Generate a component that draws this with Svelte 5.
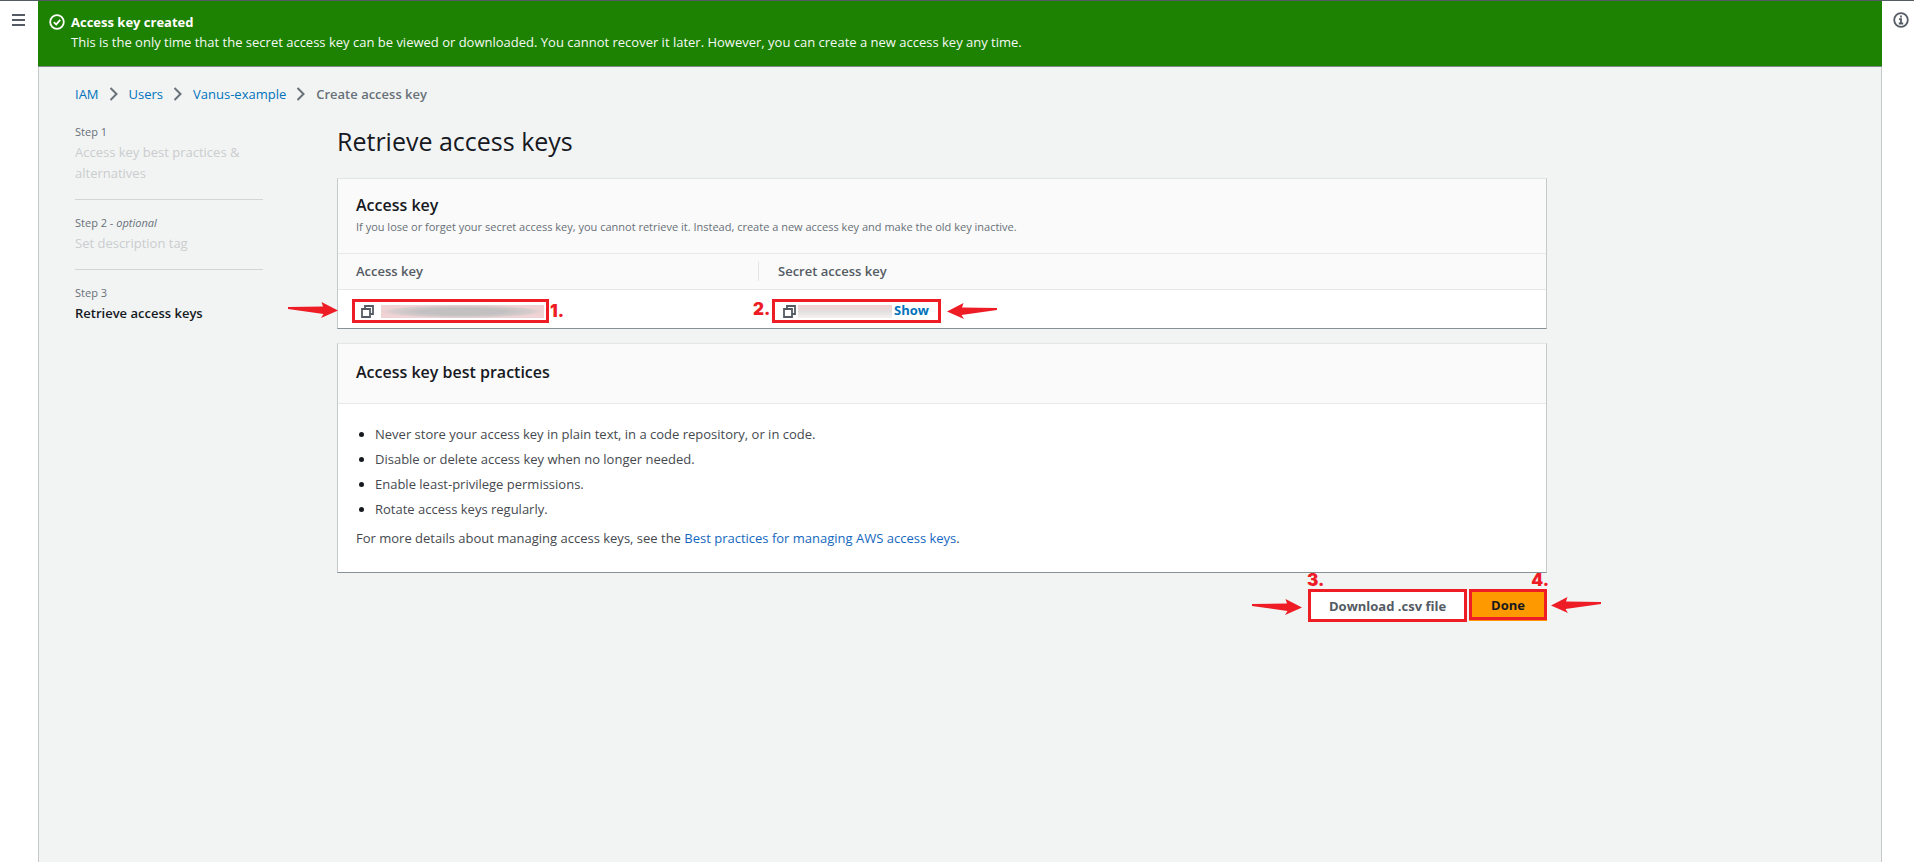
<script>
  const crumbs = ['IAM', 'Users', 'Vanus-example'];
  const steps = [
    { label: 'Step 1', title: 'Access key best practices & alternatives' },
    { label: 'Step 2', optional: true, title: 'Set description tag' },
    { label: 'Step 3', title: 'Retrieve access keys', current: true }
  ];
  const practices = [
    'Never store your access key in plain text, in a code repository, or in code.',
    'Disable or delete access key when no longer needed.',
    'Enable least-privilege permissions.',
    'Rotate access keys regularly.'
  ];
</script>

{#snippet arrow(name)}
  <svg class="arrow {name}" viewBox="0 0 50 16" width="50" height="16" aria-hidden="true">
    <path d="M0 5 L35 4.500 L33.500 0 L50 8.500 L33 16 L35.500 12 L0 7 Z" fill="#ee1c25" />
  </svg>
{/snippet}

{#snippet copyIcon()}
  <svg viewBox="0 0 13 13" width="13" height="13" fill="none" stroke="#545b64" stroke-width="1.800" aria-hidden="true">
    <path d="M1 4h8v8H1zM4 4V1h8v8H9" />
  </svg>
{/snippet}

<div class="shell">
  <div class="rail left">
    <button class="icon" aria-label="Open navigation">
      <svg viewBox="0 0 13 12" width="13" height="12" stroke="#545b64" stroke-width="2" aria-hidden="true">
        <path d="M0 1h13M0 6h13M0 11h13" />
      </svg>
    </button>
  </div>

  <div class="main">
    <div class="flash" role="status">
      <svg viewBox="0 0 16 16" width="16" height="16" fill="none" stroke="#fff" stroke-width="1.800" aria-hidden="true">
        <circle cx="8" cy="8" r="6.800" />
        <path d="M4.800 8.200 7.200 10.400 11.200 5.800" />
      </svg>
      <div>
        <strong>Access key created</strong>
        <p>This is the only time that the secret access key can be viewed or downloaded. You cannot recover it later. However, you can create a new access key any time.</p>
      </div>
    </div>

    <div class="page">
      <nav class="crumbs" aria-label="Breadcrumbs">
        {#each crumbs as crumb}
          <a href="#top">{crumb}</a>
          <svg viewBox="0 0 10 14" width="10" height="14" fill="none" stroke="#687078" stroke-width="2" aria-hidden="true">
            <path d="M1.500 1 7.500 7 1.500 13" />
          </svg>
        {/each}
        <span>Create access key</span>
      </nav>

      <div class="wizard">
        <ol class="steps">
          {#each steps as step}
            <li class:current={step.current}>
              <small>{step.label}{#if step.optional}{' '}- <em>optional</em>{/if}</small>
              <span>{step.title}</span>
            </li>
          {/each}
        </ol>

        <main>
          <h1>Retrieve access keys</h1>

          <section class="card">
            <header>
              <h2>Access key</h2>
              <p>If you lose or forget your secret access key, you cannot retrieve it. Instead, create a new access key and make the old key inactive.</p>
            </header>
            <table>
              <thead>
                <tr><th class="first">Access key</th><th><span class="split"></span>Secret access key</th></tr>
              </thead>
              <tbody>
                <tr>
                  <td>
                    <div class="mark key">
                      <button class="icon" aria-label="Copy access key">{@render copyIcon()}</button>
                      <span class="masked"></span>
                      <b class="num n1">1.</b>
                      {@render arrow('a1')}
                    </div>
                  </td>
                  <td>
                    <div class="mark secret">
                      <button class="icon" aria-label="Copy secret access key">{@render copyIcon()}</button>
                      <span class="masked light"></span>
                      <button class="show">Show</button>
                      <b class="num n2">2.</b>
                      {@render arrow('a2 back')}
                    </div>
                  </td>
                </tr>
              </tbody>
            </table>
          </section>

          <section class="card">
            <header class="plain"><h2>Access key best practices</h2></header>
            <div class="body">
              <ul>
                {#each practices as item}<li>{item}</li>{/each}
              </ul>
              <p>For more details about managing access keys, see the <a href="#practices">Best practices for managing AWS access keys</a>.</p>
            </div>
          </section>

          <div class="actions">
            <div class="act">
              <button class="btn">Download .csv file</button>
              <b class="num n3">3.</b>
              {@render arrow('a3')}
            </div>
            <div class="act">
              <button class="btn primary">Done</button>
              <b class="num n4">4.</b>
              {@render arrow('a4 back')}
            </div>
          </div>
        </main>
      </div>
    </div>
  </div>

  <div class="rail right">
    <button class="icon" aria-label="Open help panel">
      <svg viewBox="0 0 16 16" width="16" height="16" fill="none" stroke="#545b64" aria-hidden="true">
        <circle cx="8" cy="8" r="6.800" stroke-width="1.800" />
        <path d="M8 3.600v2M6 7.200h2v4M5.800 11.500h4.400" stroke-width="1.800" />
      </svg>
    </button>
  </div>
</div>

<style>
  :global(body) {
    margin: 0;
    background: #fff;
  }
  .shell {
    box-sizing: border-box;
    display: flex;
    min-height: 100vh;
    border-top: 1px solid #545b64;
    font: 13px/20px 'Open Sans', 'Noto Sans', sans-serif;
    color: #45494f;
  }
  button {
    font: inherit;
    padding: 0;
    border: 0;
    background: none;
    cursor: pointer;
  }
  .icon {
    display: flex;
  }
  a {
    color: #0073bb;
    text-decoration: none;
  }
  h1, h2, p, ul, ol {
    margin: 0;
    padding: 0;
  }
  .rail {
    flex: none;
    box-sizing: border-box;
  }
  .left {
    width: 38px;
    padding: 13px 12px;
  }
  .right {
    width: 32px;
    padding: 11px;
  }
  .main {
    flex: 1;
    min-width: 0;
    background: #f2f4f4;
    box-shadow: inset 1px 0 #c6cacd, inset -1px 0 #c6cacd;
  }
  .flash {
    display: flex;
    gap: 6px;
    padding: 11px 10px 14px 11px;
    background: #1d8102;
    border-bottom: 1px solid #7d8a84;
    color: #fff;
  }
  .flash svg {
    flex: none;
    margin-top: 2px;
  }
  .flash strong {
    display: block;
    font-weight: 700;
  }
  .flash p {
    font-weight: 500;
    color: #f4faf3;
  }
  .page {
    padding: 17px 37px;
  }
  .crumbs {
    display: flex;
    align-items: center;
    gap: 10px;
  }
  .crumbs span {
    font-weight: 600;
    color: #687078;
  }
  .wizard {
    display: grid;
    grid-template-columns: 188px minmax(0, 1210px);
    gap: 74px;
    padding-top: 17px;
  }
  .steps {
    list-style: none;
  }
  .steps li {
    padding-bottom: 15px;
    margin-bottom: 12px;
    border-bottom: 1px solid #d0d5d6;
  }
  .steps li:last-child {
    border: 0;
  }
  .steps small {
    display: block;
    font-size: 11px;
    line-height: 21px;
    color: #687078;
  }
  .steps span {
    display: block;
    line-height: 21px;
    font-weight: 500;
    color: #cacdce;
  }
  .steps .current span {
    font-weight: 600;
    color: #16191f;
  }
  h1 {
    padding-top: 5px;
    font-size: 25px;
    line-height: 30px;
    font-weight: 400;
    color: #16191f;
  }
  .card {
    background: #fff;
    border: 1px solid #e3e6e7;
    border-left-color: #c6cacd;
    border-right-color: #c6cacd;
    border-bottom: 1px solid #879196;
    margin-bottom: 14px;
  }
  h1 + .card {
    margin-top: 22px;
  }
  .card header {
    padding: 14px 18px 16px;
    background: #fafafa;
    border-bottom: 1px solid #e6e9ea;
  }
  .card header.plain {
    padding: 16px 18px 19px;
  }
  h2 {
    font-size: 16px;
    line-height: 24px;
    font-weight: 600;
    color: #16191f;
  }
  .card header p {
    font-size: 11px;
    color: #687078;
  }
  table {
    width: 100%;
    border-collapse: collapse;
    table-layout: fixed;
  }
  th {
    position: relative;
    padding: 7px 20px 8px;
    background: #fafafa;
    border-bottom: 1px solid #e6e9ea;
    text-align: left;
    font-weight: 600;
    color: #545b64;
  }
  .first {
    width: 382px;
    padding-left: 18px;
  }
  .split {
    position: absolute;
    left: 0;
    top: 8px;
    height: 19px;
    border-left: 1px solid #e3e6e7;
  }
  td {
    padding: 9px 14px 5px;
  }
  .mark {
    position: relative;
    box-sizing: border-box;
    display: flex;
    align-items: center;
    height: 24px;
    padding: 0 2px 0 6px;
    border: 3px solid #ee1c25;
  }
  .key {
    width: 197px;
    gap: 7px;
  }
  .secret {
    width: 169px;
    padding-left: 8px;
    gap: 2px;
  }
  .masked {
    flex: 1;
    height: 13px;
    background: radial-gradient(closest-side, #c2c0c1 50%, #d6cccd 85%, #f0d3d5);
  }
  .light {
    background: linear-gradient(#f3d0d2, #e2dfe0 50%, #f6f2f2);
  }
  .show {
    margin-right: 7px;
    padding-bottom: 2px;
    font-weight: 700;
    color: #0073bb;
  }
  .num {
    position: absolute;
    font: 900 17px/18px Inter, sans-serif;
    color: #ee1c25;
  }
  .n1 { left: 195px; top: 0; }
  .n2 { left: -22px; top: -2px; }
  .n3 { left: -1px; top: -18px; }
  .n4 { right: -2px; top: -18px; }
  .arrow {
    position: absolute;
  }
  .back {
    transform: scaleX(-1);
  }
  .a1 { right: 208px; top: 0; }
  .a2 { left: 172px; top: 1px; }
  .a3 { right: 165px; top: 10px; }
  .a4 { left: 82px; top: 8px; }
  .body {
    padding: 18px 18px 24px;
  }
  ul {
    padding-left: 19px;
    margin-bottom: 6px;
  }
  ul li {
    line-height: 25px;
  }
  ul li::marker {
    color: #16191f;
  }
  .body a {
    color: #1468c0;
  }
  .actions {
    display: flex;
    justify-content: flex-end;
    gap: 2px;
    margin-top: 16px;
  }
  .act {
    position: relative;
  }
  .btn {
    box-sizing: border-box;
    height: 33px;
    padding: 0 18px;
    border: 3px solid #ee1c25;
    background: #fff;
    font-weight: 700;
    color: #545b64;
  }
  .primary {
    height: 31px;
    padding: 0 19px;
    background: #f90;
    box-shadow: 0 1px #f90;
    color: #16191f;
  }
</style>
